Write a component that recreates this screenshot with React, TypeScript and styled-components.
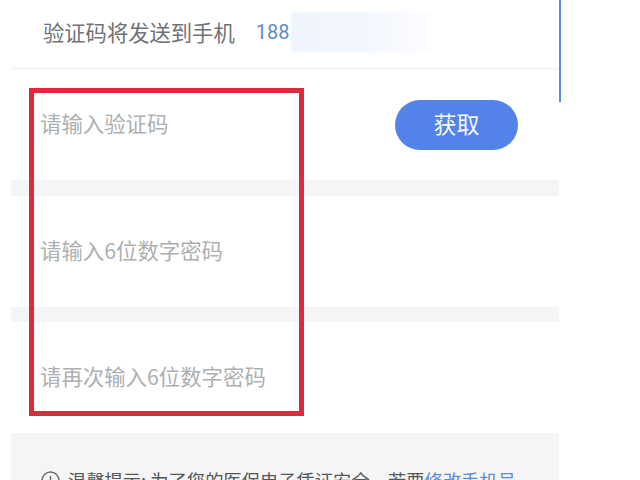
import React from "react";
import styled, { createGlobalStyle } from "styled-components";

const Global = createGlobalStyle`
  html, body { margin: 0; padding: 0; background: #fff; }
  body { width: 640px; height: 480px; overflow: hidden; font-family: "Noto Sans CJK SC", "Liberation Sans", sans-serif; }
`;

const Page = styled.div`
  position: relative;
  width: 640px;
  height: 480px;
  overflow: hidden;
`;

const Panel = styled.main`
  width: 548px;
  margin-left: 11px;
  display: flex;
  flex-direction: column;
`;

const PhoneRow = styled.div`
  height: 70px;
  box-sizing: border-box;
  padding-left: 32px;
  padding-bottom: 3px;
  display: flex;
  align-items: center;
  border-bottom: 3px solid #f6f6f7;
`;

const PhoneLabel = styled.span`
  font-size: 21.3px;
  line-height: 28px;
  color: #707275;
`;

const PhoneNumber = styled.span`
  margin-left: 21px;
  font-family: "Roboto", "Liberation Sans", sans-serif;
  font-size: 20px;
  line-height: 28px;
  color: #5f8bc8;
`;

const Masked = styled.span`
  width: 140px;
  height: 40px;
  margin-left: 2px;
  background: linear-gradient(90deg, #f0f4fc 0%, #f2f6fe 50%, #f8faff 80%, #fcfdff 98%, #ffffff 100%);
  filter: blur(1px);
`;

const InputRow = styled.div<{ $height: number }>`
  height: ${(p) => p.$height}px;
  box-sizing: border-box;
  padding: 0 41px 0 30px;
  display: flex;
  align-items: center;
  justify-content: space-between;
`;

const Placeholder = styled.span`
  font-size: 21.4px;
  line-height: 28px;
  color: #adafb1;
  margin: 0 0 4px -1px;
`;

const GetButton = styled.button`
  width: 123px;
  height: 50px;
  border: 0;
  border-radius: 25px;
  padding: 0 0 4px;
  background: #5383e9;
  color: #f4f7fd;
  font-family: inherit;
  font-size: 23px;
`;

const Gap = styled.div<{ $height: number }>`
  height: ${(p) => p.$height}px;
  background: #f5f5f5;
`;

const Notice = styled.div`
  height: 60px;
  background: #f5f5f5;
  box-sizing: border-box;
  padding: 34px 0 0 30px;
  display: flex;
  align-items: flex-start;
  gap: 8px;
`;

const NoticeText = styled.p`
  margin: 0;
  font-size: 18.3px;
  line-height: 26px;
  color: #55575a;
  white-space: nowrap;
`;

const NoticeLink = styled.span`
  color: #5f8bd0;
`;

const NoticeIcon = styled.svg`
  width: 19px;
  height: 19px;
  margin-top: 4px;
  flex: none;
`;

const RedFrame = styled.div`
  position: absolute;
  left: 29px;
  top: 88px;
  width: 275px;
  height: 328px;
  box-sizing: border-box;
  border: 5px solid #dc2b3c;
`;

const ScrollThumb = styled.div`
  position: absolute;
  left: 559px;
  top: 0;
  width: 2px;
  height: 102px;
  background: #5b8ced;
`;

export default function App() {
  return (
    <Page>
      <Global />
      <Panel>
        <PhoneRow>
          <PhoneLabel>验证码将发送到手机</PhoneLabel>
          <PhoneNumber>188</PhoneNumber>
          <Masked />
        </PhoneRow>
        <InputRow $height={110}>
          <Placeholder>请输入验证码</Placeholder>
          <GetButton>获取</GetButton>
        </InputRow>
        <Gap $height={16} />
        <InputRow $height={111}>
          <Placeholder>请输入6位数字密码</Placeholder>
        </InputRow>
        <Gap $height={15} />
        <InputRow $height={111}>
          <Placeholder>请再次输入6位数字密码</Placeholder>
        </InputRow>
        <Notice>
          <NoticeIcon viewBox="0 0 19 19" fill="none" stroke="#66686b" strokeWidth="1.4">
            <circle cx="9.5" cy="9.5" r="8.5" />
            <path d="M9.5 5v6M9.5 12.5v1.6" />
          </NoticeIcon>
          <NoticeText>
            温馨提示: 为了您的医保电子凭证安全，若要<NoticeLink>修改手机号</NoticeLink>
          </NoticeText>
        </Notice>
      </Panel>
      <RedFrame />
      <ScrollThumb />
    </Page>
  );
}
